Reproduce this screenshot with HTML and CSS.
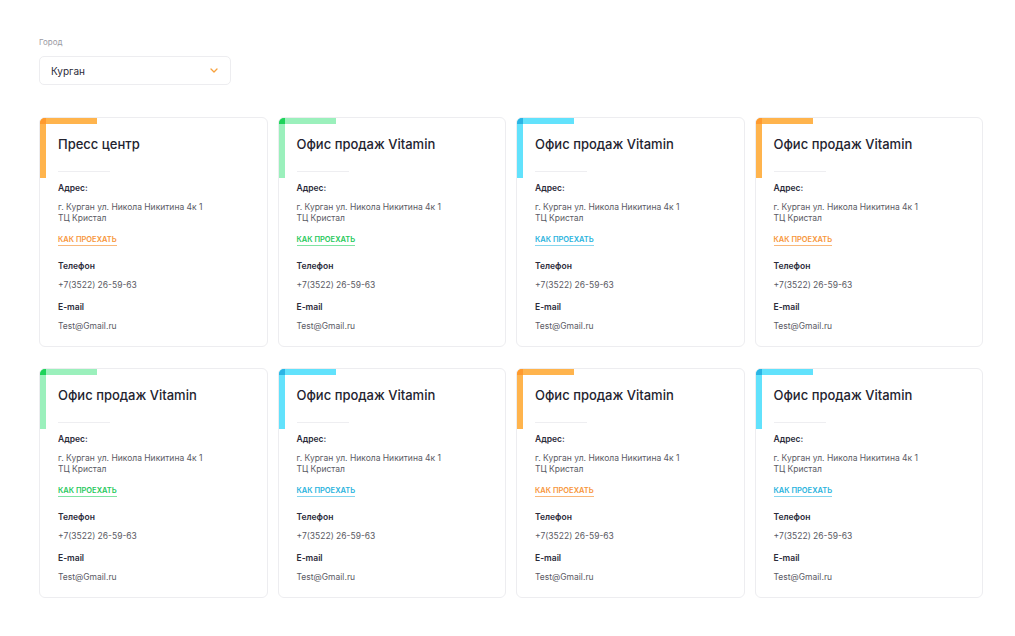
FILE: index.html
```html
<!DOCTYPE html>
<html lang="ru">
<head>
<meta charset="utf-8">
<link rel="stylesheet" href="styles.css">
</head>
<body>
<div class="page">
  <div class="field">
    <div class="field-label">Город</div>
    <div class="select">
      <span>Курган</span>
      <svg class="chev" width="8" height="5" viewBox="0 0 8 5"><path d="M1 1l3 3 3-3" fill="none" stroke="#F7A13D" stroke-width="1.3" stroke-linecap="round" stroke-linejoin="round"/></svg>
    </div>
  </div>

  <div class="grid">
    <div class="card orange">
      <div class="bar-top"></div><div class="bar-left"></div><div class="bar-corner"></div>
      <div class="title">Пресс центр</div>
      <div class="divider"></div>
      <div class="label l-first">Адрес:</div>
      <div class="addr">г. Курган ул. Никола Никитина 4к 1<br>ТЦ Кристал</div>
      <a class="link">КАК ПРОЕХАТЬ</a>
      <div class="label l-phone">Телефон</div>
      <div class="value">+7(3522) 26-59-63</div>
      <div class="label l-mail">E-mail</div>
      <div class="value">Test@Gmail.ru</div>
    </div>
    <div class="card green">
      <div class="bar-top"></div><div class="bar-left"></div><div class="bar-corner"></div>
      <div class="title">Офис продаж Vitamin</div>
      <div class="divider"></div>
      <div class="label l-first">Адрес:</div>
      <div class="addr">г. Курган ул. Никола Никитина 4к 1<br>ТЦ Кристал</div>
      <a class="link">КАК ПРОЕХАТЬ</a>
      <div class="label l-phone">Телефон</div>
      <div class="value">+7(3522) 26-59-63</div>
      <div class="label l-mail">E-mail</div>
      <div class="value">Test@Gmail.ru</div>
    </div>
    <div class="card cyan">
      <div class="bar-top"></div><div class="bar-left"></div><div class="bar-corner"></div>
      <div class="title">Офис продаж Vitamin</div>
      <div class="divider"></div>
      <div class="label l-first">Адрес:</div>
      <div class="addr">г. Курган ул. Никола Никитина 4к 1<br>ТЦ Кристал</div>
      <a class="link">КАК ПРОЕХАТЬ</a>
      <div class="label l-phone">Телефон</div>
      <div class="value">+7(3522) 26-59-63</div>
      <div class="label l-mail">E-mail</div>
      <div class="value">Test@Gmail.ru</div>
    </div>
    <div class="card orange">
      <div class="bar-top"></div><div class="bar-left"></div><div class="bar-corner"></div>
      <div class="title">Офис продаж Vitamin</div>
      <div class="divider"></div>
      <div class="label l-first">Адрес:</div>
      <div class="addr">г. Курган ул. Никола Никитина 4к 1<br>ТЦ Кристал</div>
      <a class="link">КАК ПРОЕХАТЬ</a>
      <div class="label l-phone">Телефон</div>
      <div class="value">+7(3522) 26-59-63</div>
      <div class="label l-mail">E-mail</div>
      <div class="value">Test@Gmail.ru</div>
    </div>
    <div class="card green">
      <div class="bar-top"></div><div class="bar-left"></div><div class="bar-corner"></div>
      <div class="title">Офис продаж Vitamin</div>
      <div class="divider"></div>
      <div class="label l-first">Адрес:</div>
      <div class="addr">г. Курган ул. Никола Никитина 4к 1<br>ТЦ Кристал</div>
      <a class="link">КАК ПРОЕХАТЬ</a>
      <div class="label l-phone">Телефон</div>
      <div class="value">+7(3522) 26-59-63</div>
      <div class="label l-mail">E-mail</div>
      <div class="value">Test@Gmail.ru</div>
    </div>
    <div class="card cyan">
      <div class="bar-top"></div><div class="bar-left"></div><div class="bar-corner"></div>
      <div class="title">Офис продаж Vitamin</div>
      <div class="divider"></div>
      <div class="label l-first">Адрес:</div>
      <div class="addr">г. Курган ул. Никола Никитина 4к 1<br>ТЦ Кристал</div>
      <a class="link">КАК ПРОЕХАТЬ</a>
      <div class="label l-phone">Телефон</div>
      <div class="value">+7(3522) 26-59-63</div>
      <div class="label l-mail">E-mail</div>
      <div class="value">Test@Gmail.ru</div>
    </div>
    <div class="card orange">
      <div class="bar-top"></div><div class="bar-left"></div><div class="bar-corner"></div>
      <div class="title">Офис продаж Vitamin</div>
      <div class="divider"></div>
      <div class="label l-first">Адрес:</div>
      <div class="addr">г. Курган ул. Никола Никитина 4к 1<br>ТЦ Кристал</div>
      <a class="link">КАК ПРОЕХАТЬ</a>
      <div class="label l-phone">Телефон</div>
      <div class="value">+7(3522) 26-59-63</div>
      <div class="label l-mail">E-mail</div>
      <div class="value">Test@Gmail.ru</div>
    </div>
    <div class="card cyan">
      <div class="bar-top"></div><div class="bar-left"></div><div class="bar-corner"></div>
      <div class="title">Офис продаж Vitamin</div>
      <div class="divider"></div>
      <div class="label l-first">Адрес:</div>
      <div class="addr">г. Курган ул. Никола Никитина 4к 1<br>ТЦ Кристал</div>
      <a class="link">КАК ПРОЕХАТЬ</a>
      <div class="label l-phone">Телефон</div>
      <div class="value">+7(3522) 26-59-63</div>
      <div class="label l-mail">E-mail</div>
      <div class="value">Test@Gmail.ru</div>
    </div>
  </div>
</div>
</body>
</html>
```

FILE: styles.css
```css
* { box-sizing: border-box; }
html, body { margin: 0; padding: 0; background: #fff; }
body {
  font-family: "Inter", "Noto Sans", sans-serif;
  color: #2b2b3a;
}
.page {
  width: 944px;
  margin-left: 39px;
  padding-top: 36px;
}
.field-label {
  font-size: 8px;
  line-height: 12px;
  color: #9a9aa3;
}
.select {
  margin-top: 8px;
  width: 192px;
  height: 29px;
  border: 1px solid #ededf0;
  border-radius: 5px;
  display: flex;
  align-items: center;
  justify-content: space-between;
  padding: 0 12px 0 11px;
  font-size: 10px;
  color: #2b2b3a;
}
.chev { display: block; }
.grid {
  margin-top: 32px;
  display: grid;
  grid-template-columns: repeat(4, 1fr);
  column-gap: 10px;
  row-gap: 21px;
}
.card {
  position: relative;
  border: 1px solid #ededf0;
  border-radius: 6px;
  padding: 16px 18px 16px 18px;
  height: 230px;
  overflow: hidden;
}
.bar-top, .bar-left, .bar-corner { position: absolute; left: -1px; top: -1px; }
.bar-top { width: 58px; height: 7px; border-top-left-radius: 6px; }
.bar-left { width: 7px; height: 61px; border-top-left-radius: 6px; }
.bar-corner { width: 7px; height: 7px; border-top-left-radius: 6px; }
.orange .bar-top, .orange .bar-left { background: #FFB44D; }
.orange .bar-corner { background: #FF9A2E; }
.orange .link { color: #F7963A; border-color: #F9B87A; }
.green .bar-top, .green .bar-left { background: #9BF0BC; }
.green .bar-corner { background: #1DD35A; }
.green .link { color: #1FC95B; border-color: #7FE3A2; }
.cyan .bar-top, .cyan .bar-left { background: #62E2FC; }
.cyan .bar-corner { background: #2AB4E4; }
.cyan .link { color: #29B3DD; border-color: #86D6EE; }
.title {
  font-size: 13px;
  line-height: 20px;
  font-weight: 500;
  color: #23232f;
}
.divider {
  margin-top: 17px;
  width: 52px;
  height: 1px;
  background: #eeeef1;
}
.label {
  font-size: 8.5px;
  line-height: 12px;
  font-weight: 600;
  color: #2b2b3a;
}
.l-first { margin-top: 10px; }
.addr {
  margin-top: 8px;
  font-size: 8.5px;
  line-height: 11px;
  color: #5a5a64;
}
.link {
  display: inline-block;
  margin-top: 11px;
  font-size: 7.5px;
  line-height: 10px;
  font-weight: 600;
  border-bottom: 1px solid;
  text-decoration: none;
}
.l-phone { margin-top: 14px; }
.l-mail { margin-top: 10px; }
.value {
  margin-top: 7px;
  font-size: 8.5px;
  line-height: 12px;
  color: #5a5a64;
}
```
